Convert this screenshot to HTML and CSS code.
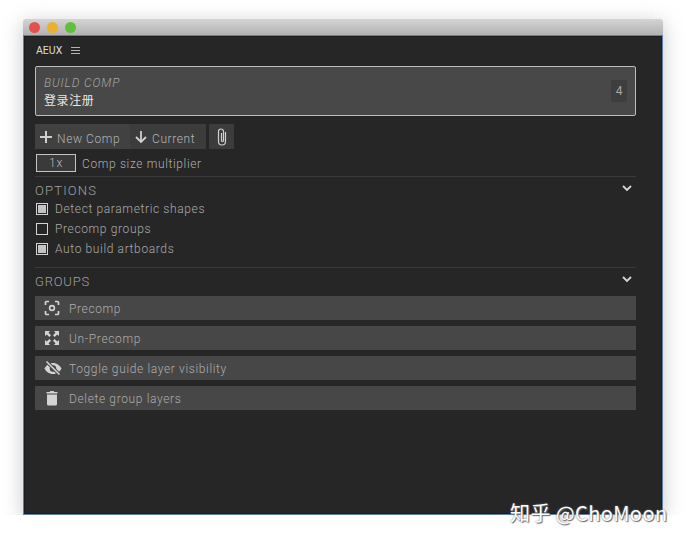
FILE: index.html
```html
<!DOCTYPE html>
<html lang="en">
<head>
    <meta charset="UTF-8">
    <title>AEUX</title>
    <link rel="stylesheet" href="styles.css">
</head>
<body>
    <div class="window">
        <div class="titlebar">
            <span class="light red"></span>
            <span class="light yellow"></span>
            <span class="light green"></span>
        </div>
        <div class="panel">
            <div class="tab">
                <span class="tab-name">AEUX</span>
                <svg class="tab-menu" width="9" height="7" viewBox="0 0 9 7"><path d="M0 .5h9M0 3.500h9M0 6.500h9" stroke="#b4b4b4" stroke-width="1" fill="none"/></svg>
            </div>

            <div class="build">
                <div class="build-text">
                    <div class="build-label">BUILD COMP</div>
                    <div class="build-name">登录注册</div>
                </div>
                <div class="build-count">4</div>
            </div>

            <div class="actions">
                <div class="action new">
                    <svg width="12" height="12" viewBox="0 0 12 12"><path d="M6 0v12M0 6h12" stroke="#cfcfcf" stroke-width="2" fill="none"/></svg>
                    <span>New Comp</span>
                </div>
                <div class="action current">
                    <svg width="14" height="14" viewBox="0 0 14 14"><path d="M7 1v11M2 7l5 5 5-5" stroke="#cfcfcf" stroke-width="1.800" fill="none"/></svg>
                    <span>Current</span>
                </div>
                <div class="action clip">
                    <svg width="10" height="18" viewBox="0 0 10 18"><path d="M8.500 4v9.500a3.500 3.500 0 0 1-7 0V3.500a2.500 2.500 0 0 1 5 0v9a1 1 0 0 1-2 0V5" stroke="#d0d0d0" stroke-width="1.200" fill="none"/></svg>
                </div>
            </div>

            <div class="multiplier">
                <div class="multiplier-box">1x</div>
                <span>Comp size multiplier</span>
            </div>

            <section class="section options">
                <div class="section-head">
                    <span>OPTIONS</span>
                    <svg width="10" height="7" viewBox="0 0 10 7"><path d="M1 1l4 4 4-4" stroke="#d6d6d6" stroke-width="1.800" fill="none"/></svg>
                </div>
                <label class="check on"><i></i>Detect parametric shapes</label>
                <label class="check"><i></i>Precomp groups</label>
                <label class="check on"><i></i>Auto build artboards</label>
            </section>

            <section class="section groups">
                <div class="section-head">
                    <span>GROUPS</span>
                    <svg width="10" height="7" viewBox="0 0 10 7"><path d="M1 1l4 4 4-4" stroke="#d6d6d6" stroke-width="1.800" fill="none"/></svg>
                </div>
                <div class="group-btn">
                    <div class="group-icon"><svg width="16" height="16" viewBox="0 0 16 16"><path d="M1.500 5V2.500a1 1 0 0 1 1-1H5M11 1.500h2.500a1 1 0 0 1 1 1V5M14.500 11v2.500a1 1 0 0 1-1 1H11M5 14.500H2.500a1 1 0 0 1-1-1V11" stroke="#d4d4d4" stroke-width="1.700" fill="none"/><circle cx="8" cy="8" r="2.400" stroke="#d4d4d4" stroke-width="1.600" fill="none"/></svg></div>
                    <span>Precomp</span>
                </div>
                <div class="group-btn">
                    <div class="group-icon"><svg width="16" height="16" viewBox="0 0 16 16"><path d="M1 1h5L4.500 2.800 7 5.300 5.300 7 2.800 4.500 1 6zM15 1v5l-1.800-1.500L10.700 7 9 5.300l2.500-2.500L10 1zM1 15v-5l1.800 1.500L5.300 9 7 10.700l-2.500 2.500L6 15zM15 15h-5l1.500-1.800L9 10.700 10.700 9l2.500 2.500L15 10z" fill="#d4d4d4"/></svg></div>
                    <span>Un-Precomp</span>
                </div>
                <div class="group-btn">
                    <div class="group-icon"><svg width="18" height="16" viewBox="0 0 18 16"><path fill-rule="evenodd" d="M9 3c4 0 7 2.500 8.500 5.500C16 11.500 13 14 9 14S2 11.500.500 8.500C2 5.500 5 3 9 3zm0 2.300a3.200 3.200 0 1 0 0 6.400 3.200 3.200 0 0 0 0-6.400z" fill="#d4d4d4"/><path d="M2.500 1.500l13 13" stroke="#484848" stroke-width="3.400"/><path d="M2.500 1.500l13 13" stroke="#d4d4d4" stroke-width="1.500"/></svg></div>
                    <span>Toggle guide layer visibility</span>
                </div>
                <div class="group-btn">
                    <div class="group-icon"><svg width="16" height="16" viewBox="0 0 16 16"><path d="M3 4.500h10V14a1.500 1.500 0 0 1-1.500 1.500h-7A1.500 1.500 0 0 1 3 14zM2.500 2h3l1-1h3l1 1h3v1.500h-11z" fill="#d4d4d4"/></svg></div>
                    <span>Delete group layers</span>
                </div>
            </section>
        </div>
    </div>

    <div class="watermark">知乎 @ChoMoon</div>
</body>
</html>
```

FILE: styles.css
```css
body {
    margin: 0;
    padding: 19px 0 0 23px;
    background-color: #fff;
    font-family: Roboto, "Noto Sans CJK SC", sans-serif;
    overflow: hidden;
}

.window {
    width: 640px;
    height: 496px;
    display: flex;
    flex-direction: column;
    border-radius: 3px 3px 0 0;
    box-shadow: 0 4px 20px rgba(110, 115, 130, 0.4);
}

.titlebar {
    height: 16px;
    flex: none;
    display: flex;
    align-items: center;
    gap: 7px;
    padding: 0 6px;
    background: linear-gradient(#d4d4d4, #b2b2b2);
    border-radius: 3px 3px 0 0;
}

.light {
    width: 11px;
    height: 11px;
    border-radius: 50%;
}

.red { background-color: #e4504c; }
.yellow { background-color: #e9b12e; }
.green { background-color: #5fc03c; }

.panel {
    flex: 1;
    padding: 0 26px 0 11px;
    background-color: #262626;
    border: 1px solid #5f7fb0;
    box-shadow: inset 0 0 0 1px #1b1d22;
}

.tab {
    height: 30px;
    display: flex;
    align-items: center;
    gap: 9px;
    padding: 0 0 2px 1px;
    box-sizing: border-box;
}

.tab-name {
    font-size: 10.5px;
    color: #dcdcdc;
}

.build {
    height: 48px;
    display: flex;
    align-items: center;
    justify-content: space-between;
    padding: 0 8px;
    background-color: #484848;
    border: 1px solid #bdbdbd;
    border-radius: 2px;
}

.build-text {
    padding-top: 4px;
}

.build-label {
    font-size: 12px;
    font-weight: 300;
    font-style: italic;
    letter-spacing: 0.9px;
    line-height: 16px;
    color: #a6a6a6;
}

.build-name {
    font-size: 12px;
    line-height: 20px;
    letter-spacing: 0.6px;
    color: #e6e6e6;
}

.build-count {
    width: 16px;
    height: 22px;
    line-height: 22px;
    text-align: center;
    font-size: 12px;
    color: #a8a8a8;
    background-color: #3e3e3e;
    border-radius: 2px;
}

.actions {
    display: flex;
    margin-top: 8px;
}

.action {
    height: 25px;
    display: flex;
    align-items: center;
    box-sizing: border-box;
    background-color: #3c3c3c;
    color: #b4b4b4;
    font-size: 12px;
    font-weight: 300;
    letter-spacing: 0.6px;
}

.action span {
    padding-top: 4px;
}

.new {
    width: 95px;
    gap: 5px;
    padding-left: 5px;
    background-color: #414141;
}

.current {
    width: 76px;
    gap: 4px;
    padding-left: 4px;
}

.clip {
    width: 25px;
    margin-left: 3px;
    justify-content: center;
}

.multiplier {
    display: flex;
    align-items: center;
    gap: 6px;
    margin-top: 5px;
    font-size: 12px;
    font-weight: 300;
    letter-spacing: 0.63px;
    color: #aeaeae;
}

.multiplier span {
    padding-top: 2px;
}

.multiplier-box {
    width: 38px;
    height: 16px;
    margin-left: 1px;
    border: 1px solid #c4c4c4;
    text-align: center;
    line-height: 17px;
    color: #bbb;
    background-color: #3a3a3a;
}

.section {
    border-top: 1px solid #3a3a3a;
}

.options {
    height: 90px;
    margin-top: 4px;
}

.section-head {
    display: flex;
    justify-content: space-between;
    align-items: center;
    padding-right: 4px;
    box-sizing: border-box;
    font-size: 13px;
    font-weight: 300;
    letter-spacing: 1.2px;
    color: #a0a0a0;
}

.section-head svg {
    margin-top: -4px;
}

.options .section-head {
    height: 21px;
    padding-top: 5px;
}

.check {
    height: 20px;
    box-sizing: border-box;
    display: flex;
    align-items: center;
    gap: 7px;
    padding: 2px 0 0 1px;
    font-size: 12px;
    font-weight: 300;
    letter-spacing: 0.63px;
    color: #aaa;
}

.check i {
    width: 10px;
    height: 10px;
    border: 1px solid #d4d4d4;
    background-clip: content-box;
}

.check.on i {
    padding: 1px;
    width: 8px;
    height: 8px;
    background-color: #c4c4c4;
}

.groups {
    padding-top: 1px;
}

.groups .section-head {
    height: 26px;
    margin-bottom: 1px;
    padding-bottom: 1px;
    letter-spacing: 0.8px;
}

.group-btn {
    height: 24px;
    display: flex;
    align-items: center;
    margin-bottom: 6px;
    padding-left: 9px;
    background-color: #474747;
    font-size: 12px;
    font-weight: 300;
    letter-spacing: 0.63px;
    color: #aeaeae;
}

.group-btn span {
    padding-top: 2px;
}

.group-icon {
    width: 25px;
    display: flex;
}

.watermark {
    position: absolute;
    left: 510px;
    top: 499px;
    font-family: "Noto Sans CJK SC", sans-serif;
    font-size: 20px;
    line-height: 28px;
    letter-spacing: 0.4px;
    color: #fff;
    text-shadow: 1px 1px 1px #666, 0 0 2px #777;
    white-space: nowrap;
}
```
